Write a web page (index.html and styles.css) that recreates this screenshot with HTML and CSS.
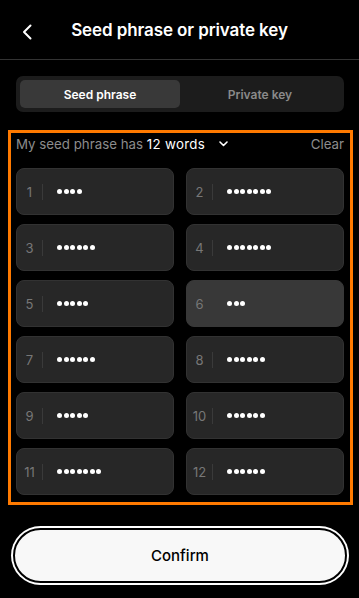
FILE: index.html
```html
<!DOCTYPE html>
<html lang="en">
<head>
  <meta charset="UTF-8" />
  <meta name="viewport" content="width=device-width, initial-scale=1.0"/>
  <title>Seed phrase or private key</title>
  <link rel="stylesheet" href="styles.css">
</head>
<body>

  <!-- Header -->
  <header class="top-bar">
    <button class="back-btn" aria-label="Back">
      <svg width="10" height="16" viewBox="0 0 10 16"><path d="M8.5 1.5 L2 8 L8.5 14.5" fill="none" stroke="#fff" stroke-width="2" stroke-linecap="round" stroke-linejoin="round"/></svg>
    </button>
    <h1>Seed phrase or private key</h1>
  </header>

  <!-- Tabs -->
  <div class="tabs">
    <div class="tab active">Seed phrase</div>
    <div class="tab">Private key</div>
  </div>

  <!-- Words -->
  <section class="phrase-box">
    <div class="phrase-head">
      <span class="count">My seed phrase has <b>12 words</b>
        <svg class="caret" width="9" height="6" viewBox="0 0 9 6"><path d="M1 1 L4.5 4.5 L8 1" fill="none" stroke="#fff" stroke-width="1.6" stroke-linecap="round" stroke-linejoin="round"/></svg>
      </span>
      <span class="clear">Clear</span>
    </div>

    <div class="word-grid">
      <div class="word"><span class="num">1</span><span class="dots"><i></i><i></i><i></i><i></i></span></div>
      <div class="word"><span class="num">2</span><span class="dots"><i></i><i></i><i></i><i></i><i></i><i></i><i></i></span></div>
      <div class="word"><span class="num">3</span><span class="dots"><i></i><i></i><i></i><i></i><i></i><i></i></span></div>
      <div class="word"><span class="num">4</span><span class="dots"><i></i><i></i><i></i><i></i><i></i><i></i><i></i></span></div>
      <div class="word"><span class="num">5</span><span class="dots"><i></i><i></i><i></i><i></i><i></i></span></div>
      <div class="word focused"><span class="num">6</span><span class="dots"><i></i><i></i><i></i></span></div>
      <div class="word"><span class="num">7</span><span class="dots"><i></i><i></i><i></i><i></i><i></i><i></i></span></div>
      <div class="word"><span class="num">8</span><span class="dots"><i></i><i></i><i></i><i></i><i></i><i></i></span></div>
      <div class="word"><span class="num">9</span><span class="dots"><i></i><i></i><i></i><i></i><i></i></span></div>
      <div class="word"><span class="num">10</span><span class="dots"><i></i><i></i><i></i><i></i><i></i><i></i></span></div>
      <div class="word"><span class="num">11</span><span class="dots"><i></i><i></i><i></i><i></i><i></i><i></i><i></i></span></div>
      <div class="word"><span class="num">12</span><span class="dots"><i></i><i></i><i></i><i></i><i></i><i></i></span></div>
    </div>
  </section>

  <div class="footer">
    <button class="confirm-btn">Confirm</button>
  </div>

</body>
</html>
```

FILE: styles.css
```css
body {
  margin: 0;
  background-color: #000;
  color: #fff;
  font-family: Inter, 'Liberation Sans', sans-serif;
  width: 359px;
  height: 598px;
  overflow: hidden;
}

.top-bar {
  position: relative;
  height: 59px;
  border-bottom: 1px solid #333;
  display: flex;
  align-items: center;
  justify-content: center;
}

.back-btn {
  position: absolute;
  left: 18px;
  top: 22px;
  background: none;
  border: none;
  padding: 2px 4px;
  cursor: pointer;
}

.top-bar h1 {
  margin: 0;
  font-size: 17px;
  font-weight: 600;
  letter-spacing: -0.1px;
}

.tabs {
  margin: 16px 15px 0 16px;
  height: 36px;
  box-sizing: border-box;
  padding: 4px;
  background-color: #1c1c1c;
  border-radius: 7px;
  display: flex;
}

.tab {
  flex: 1;
  display: flex;
  align-items: center;
  justify-content: center;
  font-size: 12px;
  font-weight: 600;
  color: #8a8a8a;
  border-radius: 5px;
}

.tab.active {
  background-color: #393939;
  color: #fff;
}

.phrase-box {
  margin: 18px 6px 0 8px;
  border: 3px solid #ff7a00;
  padding: 0 6px 6px 5px;
  height: 375px;
  box-sizing: border-box;
}

.phrase-head {
  height: 22px;
  display: flex;
  align-items: center;
  justify-content: space-between;
  font-size: 13.3px;
}

.count {
  color: #8c8c8c;
}

.count b {
  color: #fff;
  font-weight: 400;
  letter-spacing: 0.3px;
}

.caret {
  margin-left: 10px;
  vertical-align: 2px;
}

.clear {
  color: #8c8c8c;
}

.word-grid {
  margin-top: 13px;
  display: grid;
  grid-template-columns: 1fr 1fr;
  column-gap: 12px;
  row-gap: 9px;
}

.word {
  height: 47px;
  box-sizing: border-box;
  background-color: #272727;
  border: 1px solid #323232;
  border-radius: 8px;
  display: flex;
  align-items: center;
}

.word.focused {
  background-color: #383838;
  border-color: #383838;
}

.num {
  width: 25px;
  text-align: center;
  font-size: 13px;
  color: #777;
  border-right: 1px solid #3a3a3a;
  height: 16px;
  line-height: 16px;
}

.word.focused .num {
  border-right-color: transparent;
}

.dots {
  display: flex;
  gap: 1.5px;
  margin-left: 14px;
}

.dots i {
  width: 5px;
  height: 5px;
  border-radius: 50%;
  background-color: #fff;
}

.footer {
  padding: 23px 12px 0 13px;
}

.confirm-btn {
  width: 100%;
  height: 55px;
  background-color: #f8f8f8;
  border: 2px solid #000;
  box-shadow: 0 0 0 2px #fff;
  border-radius: 28px;
  font-family: Inter, 'Liberation Sans', sans-serif;
  font-size: 15px;
  font-weight: 500;
  color: #000;
  cursor: pointer;
}
```
